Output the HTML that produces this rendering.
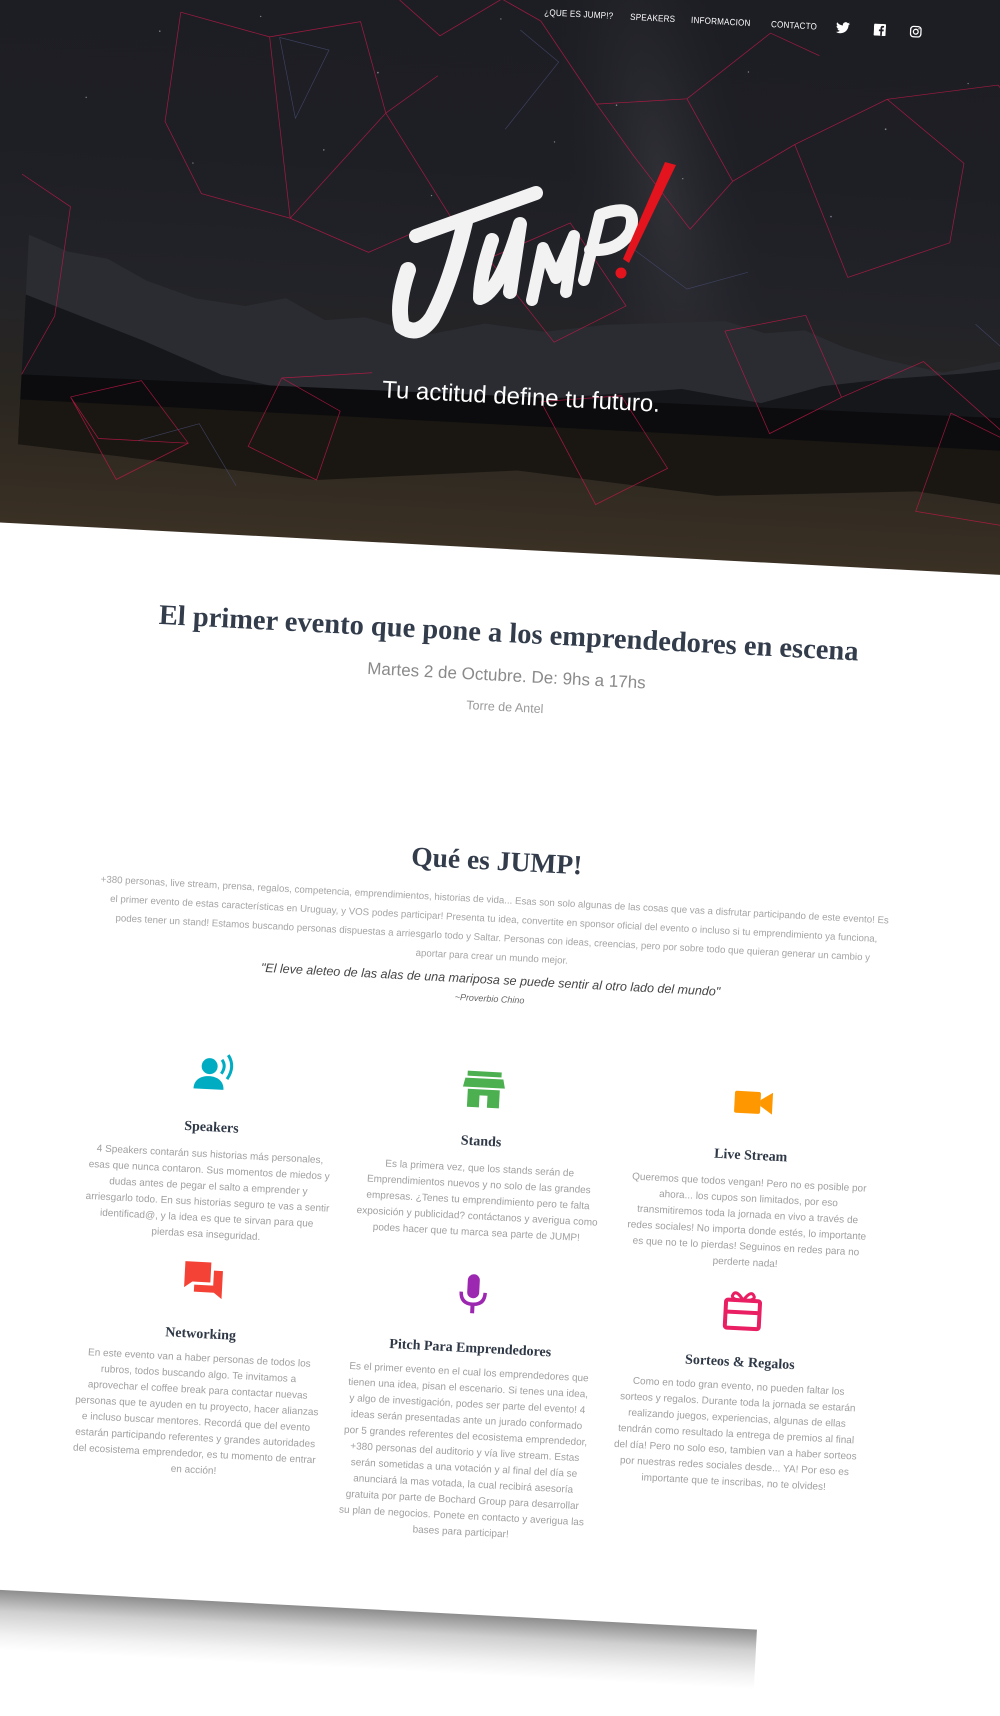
<!DOCTYPE html>
<html><head><meta charset="utf-8">
<style>
html,body{margin:0;padding:0;}
body{width:1000px;height:1618px;overflow:hidden;background:#fff;position:relative;font-family:"Liberation Sans",sans-serif;}
#wrap{position:absolute;left:0;top:0;width:1000px;height:1618px;transform:rotate(3deg);transform-origin:500px 800px;}
.page{position:absolute;left:-300px;top:-300px;width:1600px;height:1915px;background:#fff;}
.shadow{position:absolute;left:-300px;top:1615px;width:1100px;height:60px;background:linear-gradient(to bottom,#8d8d8d,#cfcfcf 35%,#f2f2f2 75%,#fff);}
.hero{position:absolute;left:-300px;top:-300px;width:1600px;height:849px;background:linear-gradient(to bottom,#1b1c21 0%,#1e1f25 55%,#222329 70%,#2a2620 85%,#3a3024 100%);overflow:hidden;}
.abs{position:absolute;}
.nav{position:absolute;top:6px;color:#fff;font-size:9px;letter-spacing:0.2px;white-space:nowrap;transform:scaleX(0.9);transform-origin:left center;}
.c{position:absolute;text-align:center;white-space:nowrap;}
.slab{font-family:"Liberation Serif",serif;font-weight:bold;color:#333c4b;}
.desc{position:absolute;width:246px;text-align:center;font-size:10px;line-height:16px;color:#a0a0a0;}
.ft{position:absolute;width:260px;text-align:center;font-family:"Liberation Serif",serif;font-weight:bold;font-size:14px;color:#2f3846;}
.ic{position:absolute;width:50px;height:50px;}
</style></head>
<body>
<div id="wrap">
 <div class="page"></div>
 <div class="shadow"></div>
 <div class="hero">
  <svg width="1600" height="849" style="position:absolute;left:0;top:0">
   <defs><radialGradient id="mw" cx="0.5" cy="0.5" r="0.5"><stop offset="0" stop-color="#4a4850" stop-opacity="0.4"/><stop offset="1" stop-color="#2a2a32" stop-opacity="0"/></radialGradient></defs>
   <ellipse cx="930" cy="480" rx="90" ry="330" fill="url(#mw)" transform="rotate(-12 930 480)"/>
   <g fill="#cfd2e0" opacity="0.55">
    <circle cx="420" cy="350" r="0.8"/><circle cx="520" cy="330" r="0.7"/><circle cx="640" cy="380" r="0.9"/><circle cx="760" cy="320" r="0.7"/><circle cx="880" cy="400" r="0.8"/><circle cx="1010" cy="360" r="0.7"/><circle cx="1150" cy="410" r="0.9"/><circle cx="1230" cy="360" r="0.7"/><circle cx="1340" cy="420" r="0.8"/><circle cx="1420" cy="330" r="0.7"/><circle cx="460" cy="480" r="0.7"/><circle cx="590" cy="460" r="0.8"/><circle cx="700" cy="500" r="0.7"/><circle cx="950" cy="470" r="0.7"/><circle cx="1100" cy="500" r="0.8"/><circle cx="1280" cy="480" r="0.7"/><circle cx="1390" cy="520" r="0.8"/><circle cx="350" cy="420" r="0.7"/><circle cx="820" cy="440" r="0.7"/>
   </g>
   <polygon fill="#2a2c32" points="300,560 340,575 380,580 420,600 470,615 520,620 560,610 600,630 640,625 700,640 760,625 820,630 880,620 940,615 1000,610 1040,620 1080,615 1120,630 1160,640 1220,650 1300,630 1360,645 1450,655 1600,640 1600,720 300,720"/>
   <polygon fill="#16171b" points="300,620 360,640 420,660 500,690 560,700 640,700 720,700 800,700 880,690 960,680 1040,690 1100,670 1160,660 1240,650 1300,640 1380,645 1600,600 1600,725 300,725"/>
   <polygon fill="#0c0c0e" points="300,700 1600,690 1600,760 300,760"/>
   <polygon fill="#1a1712" points="300,725 1600,725 1600,780 1400,790 1200,770 1000,785 800,770 600,790 300,770"/>
   <g stroke="#c81848" stroke-width="0.7" fill="none" opacity="0.8">
    <polyline points="440,330 530,350 620,330 650,420 560,530 470,510 430,440 440,330"/>
    <polyline points="530,350 560,530 640,560 720,520 650,420 700,380"/>
    <polyline points="650,300 700,340 760,300 800,320 860,400 950,390 1030,320 1080,340"/>
    <polyline points="860,400 900,450 960,520 1000,470 950,390"/>
    <polyline points="1060,430 1150,380 1230,440 1220,520 1120,560 1060,430 1000,470"/>
    <polyline points="1150,380 1260,360 1320,430 1400,460 1480,400 1500,420"/>
    <polyline points="1500,420 1600,360 1690,430 1720,560 1640,600 1560,520 1500,420"/>
    <polyline points="1320,430 1380,520 1440,600 1560,520"/>
    <polyline points="290,500 340,530 330,640 300,700"/>
    <polyline points="350,720 420,700 470,760 400,800 350,720 380,760 470,760"/>
    <polyline points="560,690 620,720 600,790 530,760 560,690 650,680"/>
    <polyline points="820,700 900,690 950,760 880,800 820,700"/>
    <polyline points="1230,690 1300,720 1290,800 1200,790 1230,690"/>
    <polyline points="1520,700 1600,650 1620,760 1540,800"/>
    <polyline points="1000,620 1080,600 1120,680 1050,720 1000,620"/>
    <polyline points="760,560 840,520 900,600 830,640 760,560"/>
    <polyline points="1120,680 1200,640 1300,720"/>
   </g>
   <g stroke="#4a4d75" stroke-width="0.6" fill="none" opacity="0.8">
    <polyline points="540,350 590,360 560,430 540,350"/>
    <polyline points="780,330 820,360 770,430"/>
    <polyline points="1380,380 1420,460 1480,420 1380,380"/>
    <polyline points="1520,420 1560,470 1610,430"/>
    <polyline points="1250,600 1300,640 1340,580"/>
    <polyline points="900,540 960,580 1020,560"/>
    <polyline points="420,760 480,740 520,800"/>
   </g>
  </svg>
 </div>

 <div class="nav" style="left:503px">¿QUE ES JUMP!?</div>
 <div class="nav" style="left:589px">SPEAKERS</div>
 <div class="nav" style="left:650px">INFORMACION</div>
 <div class="nav" style="left:730px">CONTACTO</div>
 <svg class="abs" style="left:795px;top:5px" width="14" height="12" viewBox="0 0 24 20"><path fill="#fff" d="M24 2.4a10 10 0 0 1-2.8.8A5 5 0 0 0 23.3.4a10 10 0 0 1-3.1 1.2A4.9 4.9 0 0 0 11.8 6 14 14 0 0 1 1.7.9a4.9 4.9 0 0 0 1.5 6.6A4.9 4.9 0 0 1 1 6.9a4.9 4.9 0 0 0 3.900 4.8 5 5 0 0 1-2.2.1 4.9 4.9 0 0 0 4.6 3.4A9.9 9.9 0 0 1 0 17.3 14 14 0 0 0 7.5 19.5c9.1 0 14-7.5 14-14v-.6A10 10 0 0 0 24 2.4z"/></svg>
 <svg class="abs" style="left:833px;top:5px" width="12" height="12" viewBox="0 0 12 12"><rect width="12" height="12" rx="1" fill="#fff"/><path d="M8.3 12V7.4h1.5l.2-1.8H8.3V4.5c0-.5.1-.9.9-.9h.9V2c-.2 0-.7-.1-1.3-.1-1.3 0-2.2.8-2.2 2.3v1.4H5.1v1.8h1.5V12z" fill="#1c1e24"/></svg>
 <svg class="abs" style="left:869px;top:5px" width="12" height="12" viewBox="0 0 12 12"><rect x="0.8" y="0.8" width="10.4" height="10.4" rx="3" fill="none" stroke="#fff" stroke-width="1.3"/><circle cx="6" cy="6" r="2.4" fill="none" stroke="#fff" stroke-width="1.3"/><circle cx="9.1" cy="2.9" r="0.7" fill="#fff"/></svg>

 <div class="c" style="left:0;width:1000px;top:383px;font-size:24px;color:#fff;">Tu actitud define tu futuro.</div>

 <div class="c slab" style="left:0;width:1000px;top:618px;font-size:28.5px;">El primer evento que pone a los emprendedores en escena</div>
 <div class="c" style="left:0;width:1000px;top:666px;font-size:17px;color:#8a8a8a;">Martes 2 de Octubre. De: 9hs a 17hs</div>
 <div class="c" style="left:0;width:1000px;top:700px;font-size:12.5px;color:#999;">Torre de Antel</div>

 <div class="c slab" style="left:0;width:1000px;top:845px;font-size:27.5px;">Qué es JUMP!</div>
 <div class="c" style="left:0;width:1000px;top:891px;font-size:9.7px;line-height:19px;color:#a5a5a5;">+380 personas, live stream, prensa, regalos, competencia, emprendimientos, historias de vida... Esas son solo algunas de las cosas que vas a disfrutar participando de este evento! Es<br>el primer evento de estas características en Uruguay, y VOS podes participar! Presenta tu idea, convertite en sponsor oficial del evento o incluso si tu emprendimiento ya funciona,<br>podes tener un stand! Estamos buscando personas dispuestas a arriesgarlo todo y Saltar. Personas con ideas, creencias, pero por sobre todo que quieran generar un cambio y<br>aportar para crear un mundo mejor.</div>
 <div class="c" style="left:0;width:1000px;top:973px;font-size:12.5px;font-style:italic;color:#444;">"El leve aleteo de las alas de una mariposa se puede sentir al otro lado del mundo"</div>
 <div class="c" style="left:0;width:1000px;top:994px;font-size:9px;font-style:italic;color:#666;">~Proverbio Chino</div>

 <svg class="ic" style="left:204px;top:1064px" viewBox="0 0 50 50"><circle cx="20" cy="17" r="8" fill="#00acc1"/><path d="M5 40c0-9 7-13 15-13s15 4 15 13z" fill="#00acc1"/><path d="M32 10q5 6 0 14" stroke="#00acc1" stroke-width="3" fill="none"/><path d="M38 5q8 11 0 24" stroke="#00acc1" stroke-width="3" fill="none"/></svg>
 <svg class="ic" style="left:474px;top:1064px" viewBox="0 0 50 50"><rect x="8" y="8" width="34" height="5" fill="#4caf50"/><path d="M6 15h38l2 9H4z" fill="#4caf50"/><path d="M9 26h32v18H29V32h-8v12H9z" fill="#4caf50"/></svg>
 <svg class="ic" style="left:744px;top:1064px" viewBox="0 0 50 50"><rect x="6" y="14" width="26" height="22" rx="2" fill="#ff9800"/><path d="M32 22l12-8v22l-12-8z" fill="#ff9800"/></svg>
 <div class="ft" style="left:99px;top:1135px">Speakers</div>
 <div class="ft" style="left:369px;top:1135px">Stands</div>
 <div class="ft" style="left:639px;top:1135px">Live Stream</div>
 <div class="desc" style="left:106px;top:1162px">4 Speakers contarán sus historias más personales, esas que nunca contaron. Sus momentos de miedos y dudas antes de pegar el salto a emprender y arriesgarlo todo. En sus historias seguro te vas a sentir identificad@, y la idea es que te sirvan para que pierdas esa inseguridad.</div>
 <div class="desc" style="left:376px;top:1162px">Es la primera vez, que los stands serán de Emprendimientos nuevos y no solo de las grandes empresas. ¿Tenes tu emprendimiento pero te falta exposición y publicidad? contáctanos y averigua como podes hacer que tu marca sea parte de JUMP!</div>
 <div class="desc" style="left:646px;top:1162px">Queremos que todos vengan! Pero no es posible por ahora... los cupos son limitados, por eso transmitiremos toda la jornada en vivo a través de redes sociales! No importa donde estés, lo importante es que no te lo pierdas! Seguinos en redes para no perderte nada!</div>

 <svg class="ic" style="left:204px;top:1271px" viewBox="0 0 50 50"><path d="M6 6h26v20H14l-8 6z" fill="#f44336"/><path d="M35 14h9v28l-8-6H16v-7h19z" fill="#f44336"/></svg>
 <svg class="ic" style="left:474px;top:1271px" viewBox="0 0 50 50"><rect x="19" y="4" width="12" height="24" rx="6" fill="#9c27b0"/><path d="M13 22q0 12 12 12t12-12" stroke="#9c27b0" stroke-width="3.5" fill="none"/><rect x="23" y="33" width="4" height="10" fill="#9c27b0"/></svg>
 <svg class="ic" style="left:744px;top:1271px" viewBox="0 0 50 50"><rect x="8" y="16" width="34" height="28" rx="2" fill="none" stroke="#e91e63" stroke-width="4"/><rect x="8" y="26" width="34" height="4" fill="#e91e63"/><path d="M25 16q-8-12-11-4q0 4 11 4q11 0 11-4q-3-8-11 4" stroke="#e91e63" stroke-width="3" fill="none"/></svg>
 <div class="ft" style="left:99px;top:1342px">Networking</div>
 <div class="ft" style="left:369px;top:1342px">Pitch Para Emprendedores</div>
 <div class="ft" style="left:639px;top:1342px">Sorteos &amp; Regalos</div>
 <div class="desc" style="left:106px;top:1366px">En este evento van a haber personas de todos los rubros, todos buscando algo. Te invitamos a aprovechar el coffee break para contactar nuevas personas que te ayuden en tu proyecto, hacer alianzas e incluso buscar mentores. Recordá que del evento estarán participando referentes y grandes autoridades del ecosistema emprendedor, es tu momento de entrar en acción!</div>
 <div class="desc" style="left:376px;top:1366px">Es el primer evento en el cual los emprendedores que tienen una idea, pisan el escenario. Si tenes una idea, y algo de investigación, podes ser parte del evento! 4 ideas serán presentadas ante un jurado conformado por 5 grandes referentes del ecosistema emprendedor, +380 personas del auditorio y vía live stream. Estas serán sometidas a una votación y al final del día se anunciará la mas votada, la cual recibirá asesoría gratuita por parte de Bochard Group para desarrollar su plan de negocios. Ponete en contacto y averigua las bases para participar!</div>
 <div class="desc" style="left:646px;top:1366px">Como en todo gran evento, no pueden faltar los sorteos y regalos. Durante toda la jornada se estarán realizando juegos, experiencias, algunas de ellas tendrán como resultado la entrega de premios al final del día! Pero no solo eso, tambien van a haber sorteos por nuestras redes sociales desde... YA! Por eso es importante que te inscribas, no te olvides!</div>
</div>

<svg class="abs" style="left:0;top:0" width="1000" height="400" viewBox="0 0 1000 400">
 <g stroke="#f2f2f2" fill="none" stroke-linecap="round" stroke-linejoin="round">
  <path d="M416 236 L536 193" stroke-width="14"/>
  <path d="M465 222 Q450 285 432 318 Q418 338 402 326 Q396 305 408 270" stroke-width="16"/>
  <path d="M492 240 Q480 275 480 298 Q500 292 520 224 L510 292" stroke-width="14"/>
  <path d="M532 300 L543 248 L556 278 L574 236 L566 292" stroke-width="12"/>
  <path d="M584 280 L600 215 Q640 200 630 232 Q618 252 590 250" stroke-width="12"/>
 </g>
 <path d="M665 162 L676 165 L629 263 L623 259 Z" fill="#e3141d"/>
 <circle cx="621" cy="273" r="5.5" fill="#e3141d"/>
</svg>
</body></html>
